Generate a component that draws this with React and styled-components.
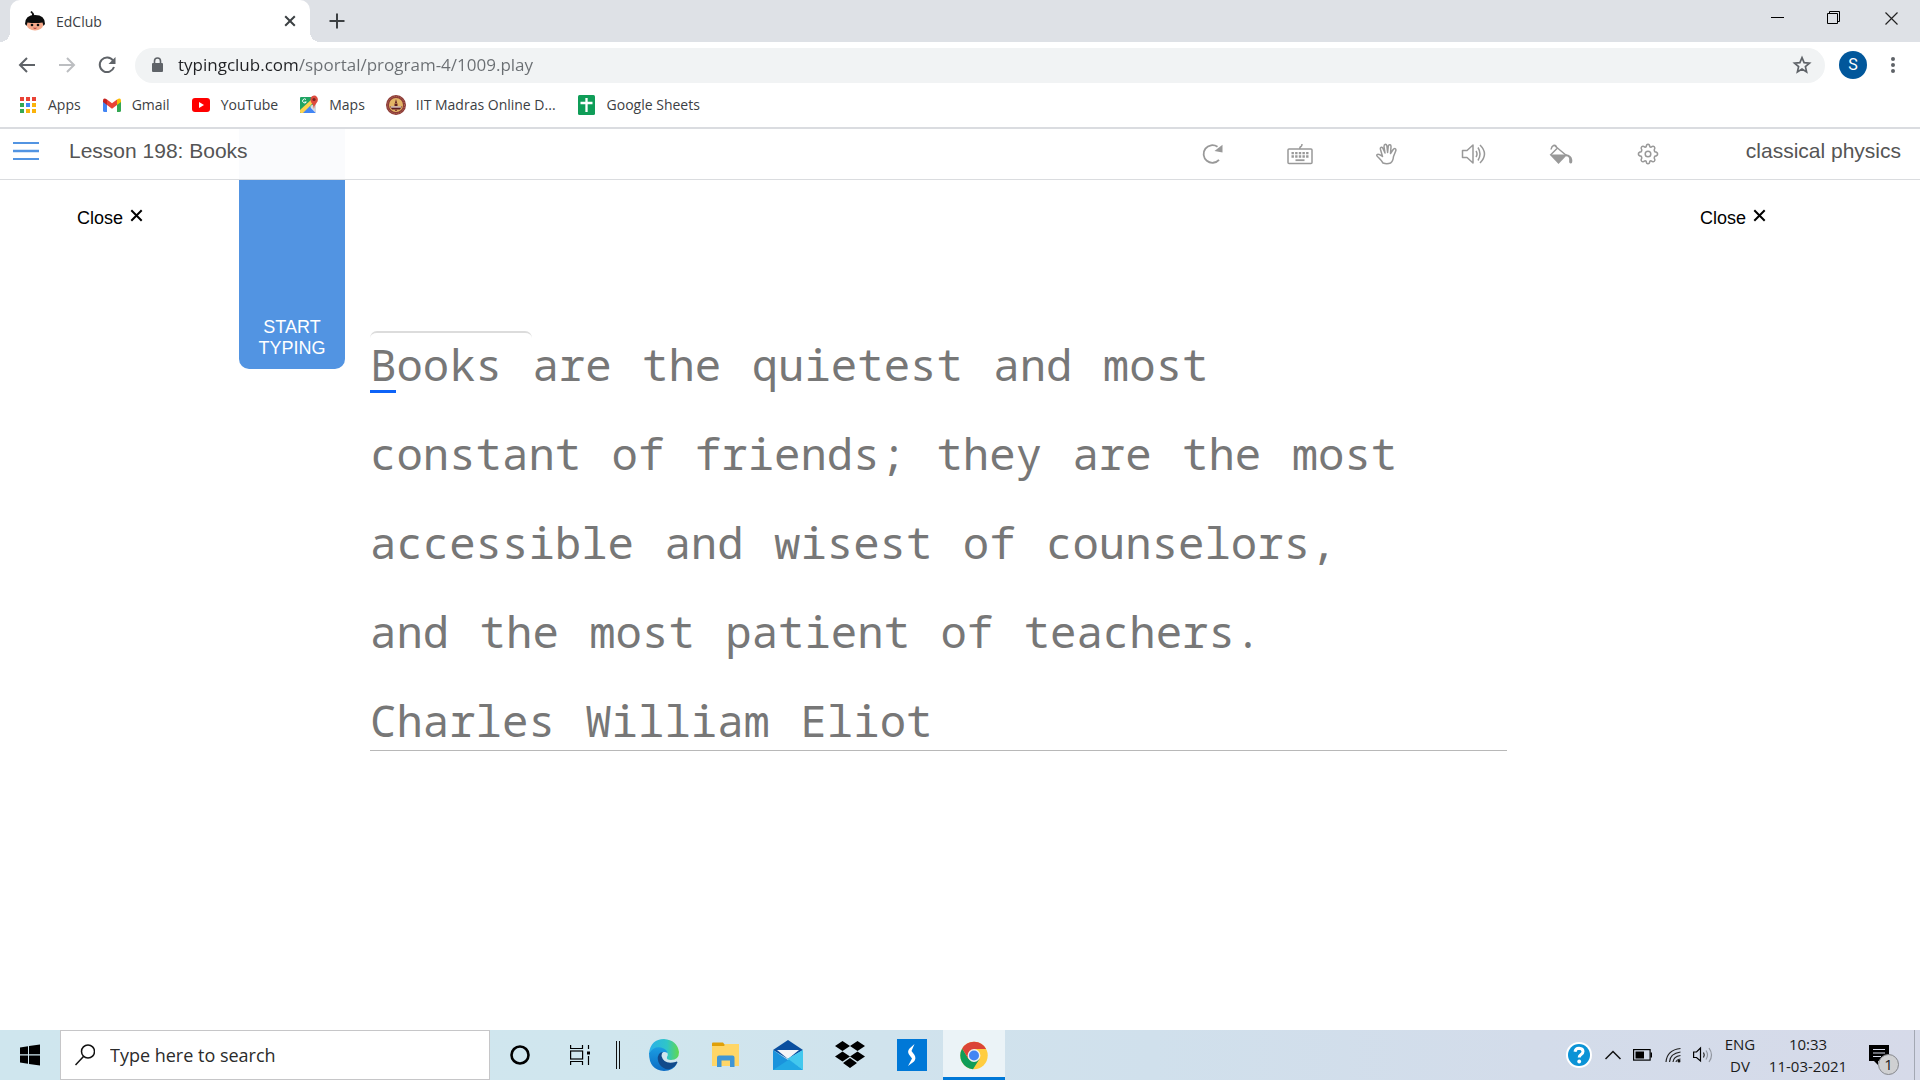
import React from "react";
import styled, { createGlobalStyle } from "styled-components";

const uiFont = `"Segoe UI", "Open Sans", "Noto Sans", sans-serif`;
const siteFont = `Arial, "Liberation Sans", sans-serif`;

const GlobalStyle = createGlobalStyle`
  *, *::before, *::after { box-sizing: border-box; }
  body { margin: 0; background: #fff; font-family: ${uiFont}; }
  button, input { font: inherit; color: inherit; }
  button { border: 0; padding: 0; margin: 0; background: none; cursor: pointer; }
  svg { display: block; flex: none; }
`;

const Screen = styled.div`
  display: flex;
  flex-direction: column;
  min-height: 100vh;
`;

/* ---------- browser window ---------- */

const TabStrip = styled.div`
  display: flex;
  height: 42px;
  padding-left: 10px;
  background: #dee1e6;
`;

const Tab = styled.div`
  position: relative;
  display: flex;
  align-items: center;
  gap: 11px;
  width: 300px;
  padding: 0 12px 0 15px;
  background: #fff;
  border-radius: 10px 10px 0 0;
  font-size: 14px;
  color: #3c4043;

  &::before, &::after {
    content: "";
    position: absolute;
    bottom: 0;
    width: 10px;
    height: 10px;
  }
  &::before {
    right: 100%;
    background: radial-gradient(circle at 0 0, #dee1e6 10px, #fff 10px);
  }
  &::after {
    left: 100%;
    background: radial-gradient(circle at 100% 0, #dee1e6 10px, #fff 10px);
  }
`;

const TabTitle = styled.span`
  flex: 1;
`;

const IconButton = styled.button`
  display: flex;
  align-items: center;
  justify-content: center;
  width: ${(p) => p.$w || 40}px;
  height: ${(p) => p.$h || 36}px;
  flex: none;
`;

const WindowButtons = styled.div`
  display: flex;
  margin-left: auto;
`;

const Toolbar = styled.div`
  display: flex;
  align-items: center;
  height: 46px;
  padding: 0 10px 0 7px;
`;

const Omnibox = styled.label`
  display: flex;
  align-items: center;
  flex: 1;
  height: 35px;
  margin: 0 14px 0 8px;
  padding: 0 3px 0 16px;
  gap: 14px;
  border-radius: 18px;
  background: #f1f3f4;
`;

const UrlInput = styled.input`
  flex: 1;
  min-width: 0;
  padding: 0;
  border: 0;
  outline: 0;
  font-size: 17px;
  line-height: 24px;
  color: #5f6368;
  background: linear-gradient(to right, #202124 121px, #6a6e72 121px);
  background-clip: text;
  -webkit-background-clip: text;
  -webkit-text-fill-color: transparent;
`;

const Avatar = styled.button`
  width: 28px;
  height: 28px;
  margin-right: 8px;
  border-radius: 50%;
  background: #01579b;
  color: #fff;
  font-family: Roboto, sans-serif;
  font-size: 16px;
  line-height: 28px;
`;

const Bookmarks = styled.nav`
  display: flex;
  align-items: center;
  gap: 21px;
  height: 41px;
  padding: 0 18px 6px;
  border-bottom: 2px solid #dadce0;
`;

const Bookmark = styled.a`
  display: flex;
  align-items: center;
  gap: 10px;
  font-size: 14px;
  line-height: 20px;
  color: #3c4043;
  text-decoration: none;
  white-space: nowrap;
`;

/* ---------- lesson page ---------- */

const LessonHeader = styled.header`
  display: flex;
  align-items: center;
  height: 51px;
  padding: 0 19px 0 12px;
  border-bottom: 1px solid #dadcdf;
  background: linear-gradient(#fafbfd, #fafbfd) 239px 0 / 106px 100% no-repeat;
  font-family: ${siteFont};
  font-size: 21px;
  line-height: 24px;
  color: #555;
`;

const HeaderLead = styled.div`
  display: flex;
  align-items: center;
  gap: 30px;
  padding-bottom: 6px;
`;

const HeaderTitle = styled.h1`
  margin: 0;
  font: inherit;
`;

const HeaderUser = styled.span`
  padding: 0 0 6px 80px;
`;

const LessonTools = styled.div`
  display: flex;
  gap: 51px;
  margin-left: auto;
  color: #999;
`;

const LessonBody = styled.main`
  display: flex;
  align-items: flex-start;
  flex: 1;
  font-family: ${siteFont};
`;

const AdSlot = styled.aside`
  display: flex;
  flex: none;
  width: ${(p) => p.$w}px;
  padding: 25px 0 0 ${(p) => p.$indent}px;
`;

const CloseButton = styled.button`
  display: flex;
  align-items: flex-start;
  gap: 7px;
  font-size: 18px;
  line-height: 26px;
  color: #000;

  svg { margin-top: 4px; }
`;

const StartTab = styled.button`
  display: flex;
  align-items: flex-end;
  justify-content: center;
  flex: none;
  width: 106px;
  height: 189px;
  padding: 0 18px 10px;
  border-radius: 0 0 10px 10px;
  background: #5294e2;
  color: #fff;
  font-size: 18px;
  line-height: 21px;
`;

const TypingPanel = styled.section`
  flex: 1;
  min-width: 0;
  margin: 151px 0 0 25px;
  border-bottom: 1px solid #b8b8b8;
`;

const ProgressEdge = styled.div`
  width: 162px;
  height: 7px;
  border-top: 2px solid #dcdcdc;
  border-radius: 8px 8px 0 0;
`;

const Passage = styled.p`
  margin: 0;
  padding-bottom: 4px;
  font-family: "Noto Mono", "Noto Sans Mono", "Droid Sans Mono", "DejaVu Sans Mono", monospace;
  font-size: 44px;
  line-height: 52px;
  color: #777;
`;

const Line = styled.span`
  display: block;
  white-space: nowrap;

  & + & { margin-top: 37px; }
`;

const Word = styled.span`
  margin-right: 4px;
`;

const Cursor = styled.span`
  display: inline-block;
  height: 52px;
  box-shadow: 0 3px 0 #0d63f8;
`;

/* ---------- taskbar ---------- */

const Taskbar = styled.footer`
  display: flex;
  align-items: stretch;
  height: 50px;
  background: linear-gradient(to right, #cfe6ee 0%, #d0e6ee 32%, #d0e0ec 60%, #d3dcea 80%, #d6dae9 100%);
  color: #1b1b1b;
`;

const TaskSearch = styled.label`
  display: flex;
  align-items: center;
  gap: 15px;
  width: 430px;
  padding-left: 14px;
  border: 1px solid #c6c6c8;
  background: #fff;
`;

const SearchInput = styled.input`
  flex: 1;
  min-width: 0;
  padding: 0;
  border: 0;
  outline: 0;
  background: none;
  font-size: 18px;
  line-height: 24px;

  &::placeholder { color: #2b2b2b; opacity: 1; }
`;

const TaskButton = styled.button`
  display: flex;
  align-items: center;
  justify-content: center;
  flex: none;
  width: ${(p) => p.$w || 62}px;
  background: ${(p) => (p.$active ? "#ebf3f7" : "none")};
  border-bottom: ${(p) => (p.$active ? "3px solid #0078d7" : "0")};
  padding-top: ${(p) => (p.$active ? "3px" : "0")};
`;

const Pinned = styled.div`
  display: flex;
  margin-left: 7px;
`;

const Tray = styled.div`
  display: flex;
  margin-left: auto;
`;

const TrayText = styled.button`
  width: ${(p) => p.$w}px;
  font-size: 15px;
  line-height: 22px;
  text-align: center;
  white-space: nowrap;
`;

const NoticeButton = styled(TaskButton)`
  position: relative;
  padding-right: 10px;
`;

const NoticeCount = styled.span`
  position: absolute;
  left: 24px;
  top: 24px;
  width: 21px;
  height: 21px;
  border: 1px solid #85878c;
  border-radius: 50%;
  background: #cfd0d2;
  font-size: 15px;
  line-height: 19px;
  text-align: center;
`;

const DesktopEdge = styled.div`
  width: 6px;
  border-left: 1px solid #a3a8b3;
`;

/* ---------- drawings ---------- */

const Favicon = () => (
  <svg width="20" height="20" viewBox="0 0 20 20">
    <path d="M6.500 5Q8 3 5.500 1.500Q5.500 0 7 0Q7 1 8.500 2Q9.500 3 9 5Z" fill="#111" />
    <ellipse cx="10" cy="13.300" rx="8.300" ry="6.200" fill="#f5a98a" />
    <path d="M0 13Q0 4 10 4Q20 4 20 13L18.500 15L17.500 11.500Q10 12.500 2.500 11.500L1.500 15Z" fill="#0c0c0c" />
    <circle cx="7" cy="14" r="1.300" fill="#111" /><circle cx="13" cy="14" r="1.300" fill="#111" />
    <path d="M8.500 17Q10 17.800 11.500 17" stroke="#a33" fill="none" />
  </svg>
);

const Cross = ({ size = 11, w = 2, color = "#3c4043" }) => (
  <svg width={size} height={size} viewBox="0 0 10 10" stroke={color} strokeWidth={(w * 10) / size}>
    <path d="M1 1L9 9M9 1L1 9" />
  </svg>
);

const ArrowIcon = ({ flip, color }) => (
  <svg width="18" height="18" viewBox="0 0 18 18" fill="none" stroke={color} strokeWidth="2">
    <path d={flip ? "M1 9H16M9 2L16 9L9 16" : "M17 9H2M9 2L2 9L9 16"} />
  </svg>
);

const ReloadIcon = () => (
  <svg width="18" height="18" viewBox="0 0 18 18">
    <path d="M15 4.500A7.300 7.300 0 1 0 16 11" fill="none" stroke="#5f6368" strokeWidth="2" />
    <path d="M17.500 1V8H10.500Z" fill="#5f6368" />
  </svg>
);

const LockIcon = () => (
  <svg width="13" height="16" viewBox="0 0 13 16">
    <rect x="1" y="6" width="11" height="9" rx="1" fill="#5f6368" />
    <path d="M3.500 7V4A3 3 0 0 1 9.500 4V7" fill="none" stroke="#5f6368" strokeWidth="1.600" />
  </svg>
);

const StarIcon = () => (
  <svg width="20" height="20" viewBox="0 0 20 20" fill="none" stroke="#5f6368" strokeWidth="1.700">
    <path d="M10 2.700L12.100 7.600L17.500 8.100L13.400 11.600L14.600 16.900L10 14.100L5.400 16.900L6.600 11.600L2.500 8.100L7.900 7.600Z" />
  </svg>
);

const DotsIcon = () => (
  <svg width="4" height="18" viewBox="0 0 4 18" fill="#5f6368">
    <circle cx="2" cy="3" r="2" /><circle cx="2" cy="9" r="2" /><circle cx="2" cy="15" r="2" />
  </svg>
);

const appColors = ["#ea4335", "#ea4335", "#ea4335", "#34a853", "#4285f4", "#fbb30b", "#34a853", "#fbb30b", "#fbb30b"];
const AppsIcon = () => (
  <svg width="20" height="20" viewBox="0 0 20 20">
    {appColors.map((c, i) => (
      <rect key={i} x={2 + (i % 3) * 6} y={2 + Math.floor(i / 3) * 6} width="4" height="4" fill={c} />
    ))}
  </svg>
);

const GmailIcon = () => (
  <svg width="20" height="20" viewBox="0 0 20 20">
    <path d="M1 6V15.500Q1 17 2.500 17H5V9Z" fill="#4285f4" />
    <path d="M15 9V17H17.500Q19 17 19 15.500V6Z" fill="#34a853" />
    <path d="M5 4.500L10 8.300L15 4.500V10L10 13.800L5 10Z" fill="#ea4335" />
    <path d="M15 4.500Q19 2 19 6V7L15 10Z" fill="#fbbc04" />
    <path d="M5 4.500Q1 2 1 6V7L5 10Z" fill="#c5221f" />
  </svg>
);

const YouTubeIcon = () => (
  <svg width="20" height="20" viewBox="0 0 20 20">
    <rect x="1" y="3" width="18" height="14" rx="3" fill="#f00" />
    <path d="M8 7V13L13 10Z" fill="#fff" />
  </svg>
);

const MapsIcon = () => (
  <svg width="20" height="20" viewBox="0 0 20 20">
    <path d="M1 3Q1 2 2 2H15V10L4 18H1Z" fill="#1fa463" />
    <path d="M3 18L10 11L17 18Z" fill="#4285f4" />
    <path d="M1 15L13 4L15 7L4 18H2Q1 18 1 17Z" fill="#fdd24c" />
    <path d="M11 11L17 8V18Z" fill="#d5d8dc" />
    <path d="M7 4.500A2 2 0 1 0 7.300 7H5.500" fill="none" stroke="#fff" />
    <path d="M15 14Q14.500 9.500 12 7Q10.500 3 13 1.200Q16 -.300 18 2Q20 5 17.500 8Q15.500 10 15 14Z" fill="#dd4b3e" />
    <circle cx="15" cy="4.500" r="1.600" fill="#7b231e" />
  </svg>
);

const IitIcon = () => (
  <svg width="20" height="20" viewBox="0 0 20 20">
    <circle cx="10" cy="10" r="10" fill="#8c3a35" />
    <circle cx="10" cy="10" r="8.500" fill="none" stroke="#b5705f" strokeDasharray="1 1" />
    <circle cx="10" cy="10" r="7" fill="#e3b566" />
    <path d="M10 4L11 8H9ZM8.500 8.500H11.500V11H8.500ZM4 11.500H16L14 14.500H6Z" fill="#5d1c22" />
    <path d="M5 12H15" stroke="#fff" />
    <path d="M9 14.500H11V16H9Z" fill="#8c3a35" />
  </svg>
);

const SheetsIcon = () => (
  <svg width="20" height="20" viewBox="0 0 20 20">
    <rect x="1" width="17" height="20" rx="1.500" fill="#0f9d58" />
    <path d="M9.500 3V17M3.500 8H15.500" stroke="#fff" strokeWidth="2.300" />
  </svg>
);

const MenuIcon = () => (
  <svg width="26" height="18" viewBox="0 0 26 18" stroke="#5294e2">
    <path d="M0 1H26M0 17H26" strokeWidth="2" /><path d="M0 9H26" strokeWidth="2.500" />
  </svg>
);

const Tool = ({ children }) => (
  <svg width="26" height="22" viewBox="0 0 26 22" fill="none" stroke="currentColor" strokeWidth="1.500" strokeLinejoin="round">
    {children}
  </svg>
);

const tools = [
  ["Restart", <><path d="M19 16.800A8.800 8.800 0 1 1 17.500 3.800" strokeWidth="1.800" /><path d="M22.500 1.800V9.500L14.500 8Z" fill="currentColor" stroke="none" /></>],
  ["Keyboard", <><rect x="1" y="6" width="24" height="14.500" rx="1" /><path d="M13 6Q12.500 4 14 3.500Q15 3 15 1" /><path d="M4.500 10.200H21.500M4.500 13.500H21.500" strokeWidth="2.300" strokeDasharray="2.400 1.250" /><path d="M8.500 17.200H17.500" strokeWidth="1.800" /></>],
  ["Hands", <path d="M9 20Q7.500 17.500 4.500 14.500Q2 12.500 3.200 11.500Q4.500 10.500 8.500 13.500L6.500 6.500Q6 4.500 7.300 4.200Q8.500 4 9.200 6L11 10L10 3.500Q10 1.500 11.300 1.300Q12.600 1.300 12.900 3L13.600 9.500L14.300 3Q14.700 1.500 16 1.800Q17.200 2.200 17 4L16.500 10.500L19.200 6.500Q20.500 5 21.600 6Q22.300 6.800 21.500 8.500L19.500 13.500Q19 18.500 16.500 20Q13 21.500 9 20Z" />],
  ["Sound", <><path d="M1.500 7.500H6L12 2V20L6 14.500H1.500Z" /><path d="M15 8Q17 11 15 14M17 4.500Q21 11 17 17.500M19 2Q28 11 19 20" /></>],
  ["Theme", <><path d="M3 6.500Q3.500 3.500 5.500 2.500Q7.500 1.500 8.500 4" /><path d="M2.500 12L9 5.500M6.500 2.500L19 13" /><path d="M1.500 11.500H19.500L10.500 21Z" fill="currentColor" stroke="none" /><path d="M18 11.500Q23.500 11.500 24.300 17Q24.500 20.500 22.800 20.500Q20.800 20.500 21.200 17Q21.500 13.500 18 13Z" fill="currentColor" stroke="none" /></>],
  ["Settings", <><path d="M11.200 3.800Q11.400 1.200 13 1.200Q14.600 1.200 14.800 3.800L16 4.300Q18 2.600 19.300 3.800Q20.500 5 19.200 7L19.700 8.700Q22.600 9 22.600 11Q22.600 13 19.700 13.300L19.200 15Q20.500 17 19.300 18.200Q18 19.400 16 17.700L14.800 18.200Q14.600 20.800 13 20.800Q11.400 20.800 11.200 18.200L10 17.700Q8 19.400 6.700 18.200Q5.500 17 6.800 15L6.300 13.300Q3.400 13 3.400 11Q3.400 9 6.300 8.700L6.800 7Q5.500 5 6.700 3.800Q8 2.600 10 4.300Z" /><circle cx="13" cy="11" r="2.800" /></>],
];

const WindowsIcon = () => (
  <svg width="20" height="22" viewBox="0 0 20 22" fill="#000">
    <path d="M0 3.500L8 2.200V10.300H0ZM9 2L20 .500V10.300H9ZM0 11.500H8V19.700L0 18.500ZM9 11.500H20V21.500L9 20Z" />
  </svg>
);
const SearchIcon = () => (
  <svg width="20" height="22" viewBox="0 0 20 22" fill="none" stroke="#111" strokeWidth="1.500">
    <circle cx="13" cy="7.500" r="6.500" /><path d="M8.500 12.500L.500 21" />
  </svg>
);
const CortanaIcon = () => (
  <svg width="20" height="20" viewBox="0 0 20 20"><circle cx="10" cy="10" r="8.500" fill="none" stroke="#000" strokeWidth="2.600" /></svg>
);
const TaskViewIcon = () => (
  <svg width="20" height="20" viewBox="0 0 20 20" fill="none" stroke="#000" strokeWidth="1.200">
    <path d="M.600 0V3.500H12.500V0M.600 20V16.500H12.500V20M18.500 0V4M18.500 11V20" /><rect x=".600" y="6" width="12" height="8" /><path d="M17 8H20" strokeWidth="3" />
  </svg>
);
const BarsIcon = () => (
  <svg width="5" height="28" viewBox="0 0 5 28" stroke="#111"><path d="M.500 0V28M3.500 0V28" /></svg>
);
const EdgeIcon = () => (
  <svg width="30" height="32" viewBox="0 0 30 32">
    <defs>
      <linearGradient id="edgeTop"><stop offset="0" stopColor="#2ab0ea" /><stop offset=".6" stopColor="#2fc5c8" /><stop offset="1" stopColor="#62d94c" /></linearGradient>
      <linearGradient id="edgeLow" x2="0" y2="1"><stop offset="0" stopColor="#1b9de2" /><stop offset="1" stopColor="#0c6cc4" /></linearGradient>
    </defs>
    <path d="M0 14Q2 0 15 0Q28 1 30 13Q30 21 22 21Q17 21 18 18Q20 15 17 12Q9 5 0 14Z" fill="url(#edgeTop)" />
    <path d="M0 14Q5 7 12 8.500Q18 10 18.500 14Q13 11 11 17Q10 26 19 28Q24 28 28 24.500Q24 32 15 32Q0 31 0 14Z" fill="url(#edgeLow)" />
    <path d="M10 15Q7 20 11 26Q15 31 21 30Q26 28 28.500 23.500Q28 22 26.500 23Q15 26 12.500 17Q12.500 14 14 13Q11.500 13 10 15Z" fill="#114a8b" />
  </svg>
);
const FolderIcon = () => (
  <svg width="28" height="26" viewBox="0 0 28 26">
    <path d="M0 1.500Q0 .500 1 .500H11L13 3V8H0Z" fill="#e0a008" /><path d="M0 4H12L13.500 2H27V24H0Z" fill="#ffd667" />
    <path d="M5 25V15.500Q5 13.500 7 13.500H20.500Q22.500 13.500 22.500 15.500V25H18V18.500H9.500V25Z" fill="#3f96d5" />
  </svg>
);
const MailIcon = () => (
  <svg width="30" height="30" viewBox="0 0 30 30">
    <path d="M0 10L15 0L30 10L15 19Z" fill="#0a4f9f" /><path d="M4 10H26L15 19Z" fill="#f4f5f7" />
    <path d="M0 10L30 30H0Z" fill="#1a93dc" /><path d="M30 10V30L14 19Z" fill="#43c8ee" /><path d="M0 30L16 19.500L30 30Z" fill="#22a8e4" />
  </svg>
);
const DropboxIcon = () => (
  <svg width="30" height="28" viewBox="0 0 30 28" fill="#000">
    <path d="M7.500 0L15 5L7.500 10L0 5ZM22.500 0L30 5L22.500 10L15 5ZM7.500 10.500L15 15.500L7.500 20.500L0 15.500ZM22.500 10.500L30 15.500L22.500 20.500L15 15.500ZM15 17L22 22L15 27L8 22Z" />
  </svg>
);
const ThunderIcon = () => (
  <svg width="30" height="32" viewBox="0 0 30 32">
    <rect width="30" height="32" fill="#0078d7" />
    <path d="M17.500 5L12.500 9.500Q10 12.500 12 15.500L15 19.500L11 27L17 22.500Q19.500 19.500 17.500 16L14.500 12Z" fill="#fff" />
  </svg>
);
const ChromeIcon = () => (
  <svg width="28" height="29" viewBox="0 0 28 28">
    <circle cx="14" cy="14" r="13.700" fill="#ffcd40" />
    <path d="M2.200 7A13.700 13.700 0 0 0 13 27.700L19.600 17.300L14 14L8.400 17.300Z" fill="#0f9d58" />
    <path d="M2.200 7A13.700 13.700 0 0 1 26.100 7.500H14V14L8.400 17.300Z" fill="#db4437" />
    <circle cx="14" cy="14" r="6.400" fill="#f1f1f1" /><circle cx="14" cy="14" r="5" fill="#4285f4" />
  </svg>
);
const HelpIcon = () => (
  <svg width="26" height="26" viewBox="0 0 26 26" fill="none">
    <circle cx="13" cy="13" r="13" fill="#fff" /><circle cx="13" cy="13" r="11" fill="#0a93d6" />
    <path d="M9 9.800Q9.500 6.300 13 6.300Q17 6.500 17 9.600Q17 11.500 14.800 12.800Q13.200 13.800 13.200 15.500" stroke="#fff" strokeWidth="3" /><circle cx="13.200" cy="19.500" r="1.900" fill="#fff" />
  </svg>
);
const ChevronIcon = () => (
  <svg width="16" height="10" viewBox="0 0 16 10" fill="none" stroke="#111" strokeWidth="1.500"><path d="M.500 9L8 1.500L15.500 9" /></svg>
);
const BatteryIcon = () => (
  <svg width="20" height="12" viewBox="0 0 20 12"><rect x=".600" y=".600" width="16.500" height="10.500" fill="none" stroke="#000" strokeWidth="1.200" /><rect x="2.500" y="2.500" width="8.500" height="7" /><rect x="17.500" y="3.500" width="1.500" height="5" /></svg>
);
const WifiIcon = () => (
  <svg width="16" height="16" viewBox="0 0 16 16" fill="none" stroke="#222" strokeWidth="1.200"><path d="M1 15Q2 3 15.500 1.500M4.500 15Q5 6.500 15.500 5M8 15Q8.500 9.500 15.500 8.500M11 15Q11.500 12.500 15.500 12" /><circle cx="14" cy="14" r="1.500" fill="#111" stroke="none" /></svg>
);
const VolumeIcon = () => (
  <svg width="20" height="18" viewBox="0 0 20 18" fill="none" strokeWidth="1.200"><path d="M.600 6H3.500L7.500 2V15L3.500 11.500H.600Z" stroke="#000" /><path d="M10.500 6.500Q12 9 10.500 11.500" stroke="#222" /><path d="M13 4.500Q16 9 13 13.500M16 2Q21 9 16 16" stroke="#9297a0" /></svg>
);
const NoticeIcon = () => (
  <svg width="20" height="22" viewBox="0 0 20 22"><path d="M0 1H20V17H9V21L5 17H0Z" fill="#000" /><path d="M4 5.500H16M4 9H16M4 12.500H12" stroke="#d6dae9" strokeWidth="1.200" /></svg>
);

const bookmarks = [
  ["Apps", AppsIcon], ["Gmail", GmailIcon], ["YouTube", YouTubeIcon], ["Maps", MapsIcon],
  ["IIT Madras Online D...", IitIcon], ["Google Sheets", SheetsIcon],
];

const passage = [
  "Books are the quietest and most",
  "constant of friends; they are the most",
  "accessible and wisest of counselors,",
  "and the most patient of teachers.",
  "Charles William Eliot",
];

const pinned = [
  ["Microsoft Edge", EdgeIcon], ["File Explorer", FolderIcon], ["Mail", MailIcon],
  ["Dropbox", DropboxIcon], ["Shortcut app", ThunderIcon],
];

const tray = [
  ["Help", HelpIcon, 38], ["Show hidden icons", ChevronIcon, 30], ["Battery", BatteryIcon, 30],
  ["Network", WifiIcon, 30], ["Volume", VolumeIcon, 30],
];

const CloseAd = () => (
  <CloseButton type="button">Close <Cross size={13} w={2} color="#000" /></CloseButton>
);

const PassageLine = ({ text, current }) => (
  <Line>
    {text.split(" ").map((word, i) => (
      <Word key={i}>
        {current && i === 0 ? <><Cursor>{word[0]}</Cursor>{word.slice(1)}</> : word}{" "}
      </Word>
    ))}
  </Line>
);

export default function App() {
  return (
    <Screen>
      <GlobalStyle />
      <TabStrip>
        <Tab>
          <Favicon />
          <TabTitle>EdClub</TabTitle>
          <IconButton $w={16} aria-label="Close tab"><Cross size={12} /></IconButton>
        </Tab>
        <IconButton $w={54} $h={42} aria-label="New tab">
          <svg width="16" height="16" viewBox="0 0 16 16" stroke="#3c4043" strokeWidth="2"><path d="M8 .500V15.500M.500 8H15.500" /></svg>
        </IconButton>
        <WindowButtons>
          <IconButton $w={56} aria-label="Minimise"><svg width="13" height="13" viewBox="0 0 13 13" stroke="#000"><path d="M0 5.500H13" /></svg></IconButton>
          <IconButton $w={57} aria-label="Restore">
            <svg width="14" height="14" viewBox="0 0 14 14" fill="none" stroke="#000"><path d="M.500 2.500H10.500V12.500H.500ZM2.500 2.500V.500H12.500V10.500H10.500" /></svg>
          </IconButton>
          <IconButton $w={58} aria-label="Close window"><Cross size={15} w={1.2} color="#222" /></IconButton>
        </WindowButtons>
      </TabStrip>

      <Toolbar>
        <IconButton aria-label="Back"><ArrowIcon color="#5f6368" /></IconButton>
        <IconButton aria-label="Forward"><ArrowIcon flip color="#bcbec1" /></IconButton>
        <IconButton aria-label="Reload"><ReloadIcon /></IconButton>
        <Omnibox>
          <LockIcon />
          <UrlInput aria-label="Address" defaultValue="typingclub.com/sportal/program-4/1009.play" />
          <IconButton aria-label="Bookmark this page"><StarIcon /></IconButton>
        </Omnibox>
        <Avatar type="button" aria-label="Profile">S</Avatar>
        <IconButton $w={35} aria-label="Menu"><DotsIcon /></IconButton>
      </Toolbar>

      <Bookmarks>
        {bookmarks.map(([name, Icon]) => (
          <Bookmark key={name} href="#"><Icon />{name}</Bookmark>
        ))}
      </Bookmarks>

      <LessonHeader>
        <HeaderLead>
          <IconButton $w={27} aria-label="Lessons menu"><MenuIcon /></IconButton>
          <HeaderTitle>Lesson 198: Books</HeaderTitle>
        </HeaderLead>
        <LessonTools>
          {tools.map(([name, drawing]) => (
            <IconButton key={name} $w={36} aria-label={name}><Tool>{drawing}</Tool></IconButton>
          ))}
        </LessonTools>
        <HeaderUser>classical physics</HeaderUser>
      </LessonHeader>

      <LessonBody>
        <AdSlot $w={239} $indent={77}><CloseAd /></AdSlot>
        <StartTab type="button">START TYPING</StartTab>
        <TypingPanel>
          <ProgressEdge />
          <Passage>
            {passage.map((line, i) => <PassageLine key={line} text={line} current={i === 0} />)}
          </Passage>
        </TypingPanel>
        <AdSlot $w={413} $indent={193}><CloseAd /></AdSlot>
      </LessonBody>

      <Taskbar>
        <TaskButton $w={60} aria-label="Start"><WindowsIcon /></TaskButton>
        <TaskSearch>
          <SearchIcon />
          <SearchInput aria-label="Search" placeholder="Type here to search" />
        </TaskSearch>
        <TaskButton $w={60} aria-label="Cortana"><CortanaIcon /></TaskButton>
        <TaskButton $w={60} aria-label="Task view"><TaskViewIcon /></TaskButton>
        <TaskButton $w={16} aria-label="Toolbar handle"><BarsIcon /></TaskButton>
        <Pinned>
          {pinned.map(([name, Icon]) => (
            <TaskButton key={name} aria-label={name}><Icon /></TaskButton>
          ))}
          <TaskButton $active aria-label="Google Chrome"><ChromeIcon /></TaskButton>
        </Pinned>
        <Tray>
          {tray.map(([name, Icon, w]) => (
            <TaskButton key={name} $w={w} aria-label={name}><Icon /></TaskButton>
          ))}
          <TrayText $w={44}>ENG<br />DV</TrayText>
          <TrayText $w={92}>10:33<br />11-03-2021</TrayText>
          <NoticeButton $w={60} aria-label="Notifications"><NoticeIcon /><NoticeCount>1</NoticeCount></NoticeButton>
          <DesktopEdge />
        </Tray>
      </Taskbar>
    </Screen>
  );
}
